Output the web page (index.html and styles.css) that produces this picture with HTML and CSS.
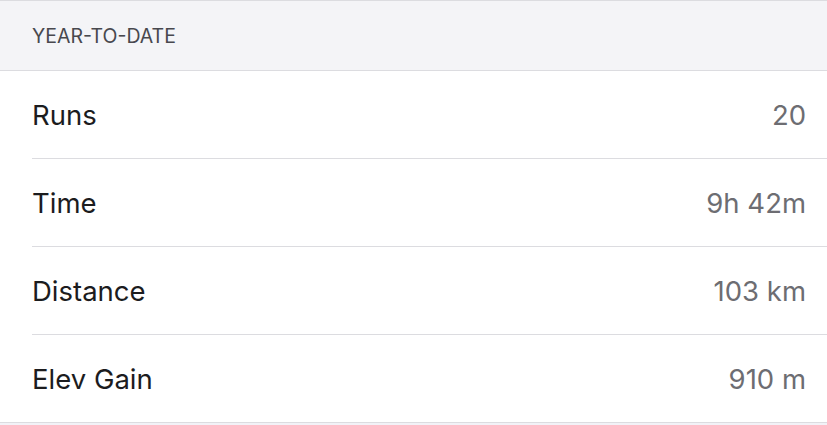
FILE: index.html
```html
<!DOCTYPE html>
<html lang="en">
<head>
    <meta charset="UTF-8">
    <meta name="viewport" content="width=device-width, initial-scale=1.0">
    <title>Year-to-date</title>
    <link rel="stylesheet" href="styles.css">
</head>
<body>
    <div class="section">
        <div class="section-header">YEAR-TO-DATE</div>
        <div class="list">
            <div class="row">
                <span class="label">Runs</span>
                <span class="value">20</span>
            </div>
            <div class="row">
                <span class="label">Time</span>
                <span class="value">9h 42m</span>
            </div>
            <div class="row">
                <span class="label">Distance</span>
                <span class="value">103 km</span>
            </div>
            <div class="row">
                <span class="label">Elev Gain</span>
                <span class="value">910 m</span>
            </div>
        </div>
    </div>
</body>
</html>
```

FILE: styles.css
```css
body {
    margin: 0;
    font-family: Inter, "Noto Sans", sans-serif;
    background-color: #f2f2f7;
}
.section {
    border-top: 1px solid #dcdce0;
}
.section-header {
    height: 70px;
    box-sizing: border-box;
    padding: 0 32px;
    display: flex;
    align-items: center;
    background-color: #f4f4f7;
    color: #48484e;
    font-size: 19.5px;
    border-bottom: 1px solid #dcdce0;
}
.list {
    background-color: white;
    padding-left: 32px;
    border-bottom: 1px solid #dcdce0;
}
.row {
    height: 87px;
    display: flex;
    align-items: center;
    justify-content: space-between;
    padding-right: 21px;
    border-bottom: 1px solid #dcdce0;
}
.row:last-child {
    border-bottom: none;
}
.label {
    font-size: 27.5px;
    color: #1c1c1e;
}
.value {
    font-size: 27.5px;
    color: #6d6d72;
}
```
